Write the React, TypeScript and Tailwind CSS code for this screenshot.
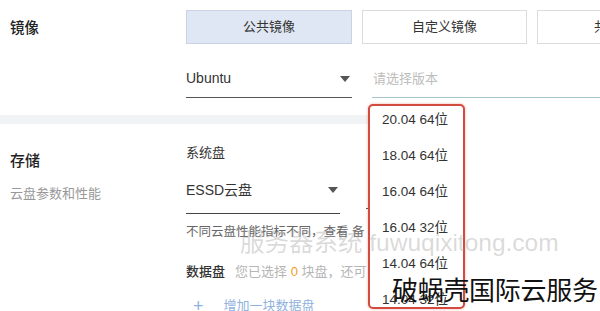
const versions = ["20.04 64位", "18.04 64位", "16.04 64位", "16.04 32位", "14.04 64位", "14.04 32位"];

function Caret() {
  return (
    <svg width="10" height="6" viewBox="0 0 10 6" className="shrink-0">
      <path d="M0 0h10L5 6z" fill="#555" />
    </svg>
  );
}

export default function App() {
  return (
    <div
      className="relative w-[600px] h-[311px] overflow-hidden bg-white text-[#333]"
      style={{ fontFamily: '"Liberation Sans", "Noto Sans CJK SC", sans-serif' }}
    >
      {/* 镜像 */}
      <div className="flex">
        <div className="w-[186px] shrink-0 pl-[10px] pt-[18px] text-[14.5px] font-medium text-[#222]">镜像</div>
        <div className="flex-1 min-w-0 pt-[10px]">
          <div className="flex gap-[10px] text-[13px]">
            <div className="w-[166px] h-[34px] shrink-0 flex items-center justify-center bg-[#e0e7f4] border border-[#c9d3e4]">公共镜像</div>
            <div className="w-[165px] h-[34px] shrink-0 flex items-center justify-center bg-white border border-[#dcdcdc]">自定义镜像</div>
            <div className="w-[166px] h-[34px] shrink-0 flex items-center justify-center bg-white border border-[#dcdcdc]">共享镜像</div>
          </div>
          <div className="flex gap-[20px] mt-[16px]">
            <div className="w-[166px] h-[38px] shrink-0 flex items-center justify-between pr-[2px] border-b-[1.5px] border-[#555] text-[14px]">
              <span>Ubuntu</span>
              <Caret />
            </div>
            <div className="flex-1 h-[38px] flex items-center pl-[1px] border-b-[1.5px] border-[#a9c5cd] text-[13px] text-[#bdbdbd]">请选择版本</div>
          </div>
        </div>
      </div>

      <div className="w-[368px] h-[9px] mt-[17px] bg-[#f2f3f5]" />

      {/* 存储 */}
      <div className="flex">
        <div className="w-[186px] shrink-0 pl-[10px] pt-[26px]">
          <div className="text-[15px] font-medium text-[#222]">存储</div>
          <div className="mt-[11px] text-[13px] text-[#999]">云盘参数和性能</div>
        </div>
        <div className="flex-1 min-w-0 pt-[19px]">
          <div className="text-[13px]">系统盘</div>
          <div className="flex items-end gap-[26px]">
            <div className="w-[154px] h-[51px] shrink-0 flex items-end pb-[12px] border-b-[1.5px] border-[#444] text-[14px]">
              <div className="flex-1 flex items-center justify-between pr-[2px]">
                <span>ESSD云盘</span>
                <Caret />
              </div>
            </div>
            <div className="w-[10px] h-[1px] mb-[5px] bg-[#555]" />
          </div>
          <div className="mt-[9px] text-[12.5px] text-[#666] whitespace-nowrap">不同云盘性能指标不同，查看 备</div>
          <div className="flex items-center gap-[10px] mt-[21px] text-[13px] whitespace-nowrap">
            <span className="font-medium text-[#333]">数据盘</span>
            <span className="text-[#b5b5b5]">
              您已选择 <span className="text-[#f0a020]">0</span> 块盘，还可以选择
            </span>
          </div>
          <div className="flex items-center gap-[20px] mt-[14px] pl-[7px] text-[13px] text-[#8fb2de]">
            <span className="text-[18px] leading-none">+</span>
            <span>增加一块数据盘</span>
          </div>
        </div>
      </div>

      {/* version dropdown */}
      <div className="absolute left-[368px] top-[104px] w-[97px] h-[205px] bg-white rounded-[5px] border-[2.5px] border-[#d24b3e] shadow-[0_0_3px_rgba(210,75,62,0.4)]">
        <div className="flex flex-col gap-[20px] pt-[6px] pl-[12px] text-[13.5px] leading-[16px] text-[#333]">
          {versions.map((v) => (
            <div key={v} className="whitespace-nowrap">{v}</div>
          ))}
        </div>
      </div>

      {/* watermarks */}
      <div className="absolute left-[240px] top-[231px] text-[24.5px] leading-none whitespace-nowrap text-[rgba(150,150,150,0.35)]">
        服务器系统 fuwuqixitong.com
      </div>
      <div className="absolute left-[392px] top-[278px] text-[26px] leading-none whitespace-nowrap text-[#111] tracking-[-0.3px]">
        破蜗壳国际云服务
      </div>
    </div>
  );
}
